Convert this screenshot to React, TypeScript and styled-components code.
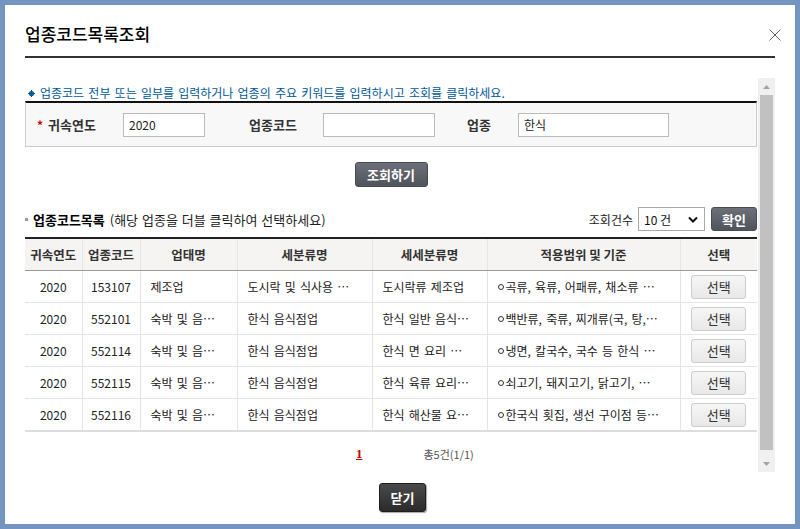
import React from 'react';
import styled, { createGlobalStyle } from 'styled-components';

const GlobalStyle = createGlobalStyle`
  html, body {
    margin: 0;
    padding: 0;
    background: #7495bf;
  }
  body {
    font-family: "Noto Sans CJK KR", "Noto Sans", sans-serif;
    color: #333;
  }
`;

interface Row {
    year: string;
    code: string;
    bizType: string;
    subClass: string;
    detailClass: string;
    scope: string;
}

const rows: Row[] = [
    { year: '2020', code: '153107', bizType: '제조업', subClass: '도시락 및 식사용 …', detailClass: '도시락류 제조업', scope: '곡류, 육류, 어패류, 채소류 …' },
    { year: '2020', code: '552101', bizType: '숙박 및 음…', subClass: '한식 음식점업', detailClass: '한식 일반 음식…', scope: '백반류, 죽류, 찌개류(국, 탕,…' },
    { year: '2020', code: '552114', bizType: '숙박 및 음…', subClass: '한식 음식점업', detailClass: '한식 면 요리 …', scope: '냉면, 칼국수, 국수 등 한식 …' },
    { year: '2020', code: '552115', bizType: '숙박 및 음…', subClass: '한식 음식점업', detailClass: '한식 육류 요리…', scope: '쇠고기, 돼지고기, 닭고기, …' },
    { year: '2020', code: '552116', bizType: '숙박 및 음…', subClass: '한식 음식점업', detailClass: '한식 해산물 요…', scope: '한국식 횟집, 생선 구이점 등…' },
];

const columns = [
    { title: '귀속연도', width: 57 },
    { title: '업종코드', width: 58 },
    { title: '업태명', width: 97 },
    { title: '세분류명', width: 135 },
    { title: '세세분류명', width: 115 },
    { title: '적용범위 및 기준', width: 193 },
    { title: '선택', width: 77 },
];

const Frame = styled.div`
  margin: 5px;
  height: 519px;
  background: #fff;
  display: flex;
  flex-direction: column;
  padding: 0 20px;
  box-sizing: border-box;
  position: relative;
`;

const Header = styled.div`
  padding-top: 20px;
  height: 31px;
  border-bottom: 2px solid #333;
`;

const Title = styled.h1`
  margin: 0;
  font-size: 17px;
  line-height: 18px;
  font-weight: 500;
  color: #000;
  word-spacing: 1px;
`;

const CloseButton = styled.div`
  position: absolute;
  top: 17px;
  right: 14px;
  width: 12px;
  height: 12px;
  cursor: pointer;
`;

const ScrollArea = styled.div`
  margin-top: 20px;
  height: 394px;
  display: flex;
  overflow: hidden;
`;

const Content = styled.div`
  width: 732px;
  flex-shrink: 0;
`;

const ScrollBar = styled.div`
  width: 17px;
  margin-left: 1px;
  background: #f0f0f0;
  display: flex;
  flex-direction: column;
`;

const ArrowBtn = styled.div`
  height: 17px;
  display: flex;
  align-items: center;
  justify-content: center;
`;

const Track = styled.div`
  flex: 1;
  padding: 0 2px 5px;
  display: flex;
`;

const Thumb = styled.div`
  flex: 1;
  background: #c1c1c1;
`;

const InfoText = styled.p`
  margin: 0;
  padding: 7px 0 0 3px;
  height: 16px;
  font-size: 12px;
  line-height: 16px;
  word-spacing: 1.5px;
  color: #00589a;
  display: flex;
  align-items: center;
  gap: 5px;
`;

const SearchBox = styled.div`
  border: 1px solid #ccc;
  border-top: 2px solid #111;
  background: #f8f8f8;
  height: 43px;
  padding: 0 11px;
  display: flex;
  align-items: center;
`;

const Required = styled.span`
  color: #c00;
  font-size: 12px;
  font-weight: bold;
  width: 11px;
`;

const Label = styled.label<{ $w: number; $ml?: number }>`
  width: ${(p) => p.$w}px;
  margin-left: ${(p) => p.$ml ?? 0}px;
  font-size: 13px;
  font-weight: bold;
  color: #333;
`;

const Input = styled.input<{ $w: number }>`
  width: ${(p) => p.$w}px;
  height: 24px;
  box-sizing: border-box;
  border: 1px solid #bbb;
  background: #fff;
  padding: 0 5px;
  font-family: inherit;
  font-size: 12px;
  color: #222;
  outline: none;
`;

const Center = styled.div<{ $mt: number }>`
  display: flex;
  justify-content: center;
  margin-top: ${(p) => p.$mt}px;
`;

const DarkButton = styled.button<{ $w: number; $h: number }>`
  width: ${(p) => p.$w}px;
  height: ${(p) => p.$h}px;
  border: 1px solid #474b52;
  border-radius: 3px;
  background: linear-gradient(#6b7079, #50545c);
  color: #fff;
  font-family: inherit;
  font-size: 13px;
  font-weight: bold;
  padding: 0;
  cursor: pointer;
`;

const CloseDialogButton = styled(DarkButton)`
  background: linear-gradient(#4a4a4a, #2b2b2b);
  border-color: #1e1e1e;
  box-shadow: 1px 1px 1px rgba(0, 0, 0, 0.35);
`;

const ListBar = styled.div`
  margin-top: 20px;
  height: 24px;
  display: flex;
  align-items: center;
`;

const SquareBullet = styled.span`
  width: 3px;
  height: 3px;
  background: #999;
  margin-right: 5px;
`;

const ListTitle = styled.strong`
  font-size: 13px;
  color: #000;
`;

const ListHint = styled.span`
  font-size: 13px;
  color: #222;
  margin-left: 5px;
  word-spacing: 1px;
  flex: 1;
`;

const CountLabel = styled.span`
  font-size: 12px;
  color: #222;
  margin-right: 5px;
`;

const FakeSelect = styled.div`
  width: 67px;
  height: 24px;
  box-sizing: border-box;
  border: 1px solid #aaa;
  background: #fff;
  display: flex;
  align-items: center;
  justify-content: space-between;
  padding: 0 6px 0 5px;
  font-size: 12px;
  color: #111;
  margin-right: 6px;
`;

const Table = styled.table`
  margin-top: 6px;
  width: 732px;
  border-collapse: collapse;
  table-layout: fixed;
  border-top: 2px solid #222;
`;

const Th = styled.th`
  height: 31px;
  padding: 0;
  background: #f5f4f2;
  border-bottom: 1px solid #999;
  border-left: 1px solid #e6e6e6;
  font-size: 12.5px;
  font-weight: bold;
  color: #333;
  text-align: center;
  &:first-child {
    border-left: none;
  }
`;

const Tr = styled.tr`
  &:last-child td {
    border-bottom: 2px solid #ddd;
  }
`;

const Td = styled.td<{ $center?: boolean }>`
  height: 31px;
  padding: 0 ${(p) => (p.$center ? 0 : 10)}px;
  border-bottom: 1px solid #e4e4e4;
  border-left: 1px solid #e4e4e4;
  font-size: 12px;
  word-spacing: 1.5px;
  color: #222;
  text-align: ${(p) => (p.$center ? 'center' : 'left')};
  white-space: nowrap;
  overflow: hidden;
  &:first-child {
    border-left: none;
  }
`;

const Ring = styled.span`
  display: inline-block;
  width: 4px;
  height: 4px;
  border: 1px solid #333;
  border-radius: 50%;
  margin-right: 2px;
  vertical-align: 2px;
`;

const PickButton = styled.button`
  width: 55px;
  height: 24px;
  border: 1px solid #ccc;
  border-radius: 3px;
  background: linear-gradient(#f6f6f6, #e8e8e8);
  font-family: inherit;
  font-size: 13px;
  color: #333;
  padding: 0;
  cursor: pointer;
`;

const Pager = styled.div`
  margin-top: 14px;
  padding-left: 331px;
  display: flex;
  align-items: center;
  height: 16px;
`;

const PageNum = styled.a`
  font-family: "Liberation Serif", serif;
  font-size: 13px;
  font-weight: bold;
  color: #c00;
  text-decoration: underline;
`;

const Total = styled.span`
  margin-left: 61px;
  font-size: 11px;
  color: #555;
`;

const Footer = styled.div`
  margin-top: 11px;
  display: flex;
  justify-content: center;
  padding-left: 5px;
`;

const Gear = () => (
    <svg width="7" height="7" viewBox="0 0 7 7">
        <circle cx="3.5" cy="3.5" r="2.6" fill="#00589a" />
        <circle cx="3.5" cy="3.5" r="1" fill="#fff" />
        <rect x="3" y="0" width="1" height="7" fill="#00589a" />
        <rect x="0" y="3" width="7" height="1" fill="#00589a" />
    </svg>
);

const App = () => {
    return (
        <>
            <GlobalStyle />
            <Frame>
                <Header>
                    <Title>업종코드목록조회</Title>
                </Header>
                <CloseButton>
                    <svg width="12" height="12" viewBox="0 0 12 12">
                        <path d="M0.5 0.5 L11.5 11.5 M11.5 0.5 L0.5 11.5" stroke="#5a5f78" strokeWidth="1" />
                    </svg>
                </CloseButton>

                <ScrollArea>
                    <Content>
                        <InfoText>
                            <Gear />
                            업종코드 전부 또는 일부를 입력하거나 업종의 주요 키워드를 입력하시고 조회를 클릭하세요.
                        </InfoText>
                        <SearchBox>
                            <Required>*</Required>
                            <Label $w={75}>귀속연도</Label>
                            <Input $w={82} defaultValue="2020" />
                            <Label $w={74} $ml={44}>업종코드</Label>
                            <Input $w={112} defaultValue="" />
                            <Label $w={51} $ml={32}>업종</Label>
                            <Input $w={151} defaultValue="한식" />
                        </SearchBox>
                        <Center $mt={15}>
                            <DarkButton $w={73} $h={25}>조회하기</DarkButton>
                        </Center>
                        <ListBar>
                            <SquareBullet />
                            <ListTitle>업종코드목록</ListTitle>
                            <ListHint>(해당 업종을 더블 클릭하여 선택하세요)</ListHint>
                            <CountLabel>조회건수</CountLabel>
                            <FakeSelect>
                                <span>10 건</span>
                                <svg width="10" height="7" viewBox="0 0 10 7">
                                    <path d="M1 1.5 L5 5.5 L9 1.5" stroke="#111" strokeWidth="2" fill="none" />
                                </svg>
                            </FakeSelect>
                            <DarkButton $w={46} $h={24}>확인</DarkButton>
                        </ListBar>
                        <Table>
                            <colgroup>
                                {columns.map((c) => (
                                    <col key={c.title} style={{ width: c.width }} />
                                ))}
                            </colgroup>
                            <thead>
                                <tr>
                                    {columns.map((c) => (
                                        <Th key={c.title}>{c.title}</Th>
                                    ))}
                                </tr>
                            </thead>
                            <tbody>
                                {rows.map((r) => (
                                    <Tr key={r.code}>
                                        <Td $center>{r.year}</Td>
                                        <Td $center>{r.code}</Td>
                                        <Td>{r.bizType}</Td>
                                        <Td>{r.subClass}</Td>
                                        <Td>{r.detailClass}</Td>
                                        <Td>
                                            <Ring />
                                            {r.scope}
                                        </Td>
                                        <Td $center>
                                            <PickButton>선택</PickButton>
                                        </Td>
                                    </Tr>
                                ))}
                            </tbody>
                        </Table>
                        <Pager>
                            <PageNum>1</PageNum>
                            <Total>총5건(1/1)</Total>
                        </Pager>
                    </Content>
                    <ScrollBar>
                        <ArrowBtn>
                            <svg width="7" height="4" viewBox="0 0 7 4">
                                <path d="M0 4 L3.5 0 L7 4 Z" fill="#a3a3a3" />
                            </svg>
                        </ArrowBtn>
                        <Track>
                            <Thumb />
                        </Track>
                        <ArrowBtn>
                            <svg width="7" height="4" viewBox="0 0 7 4">
                                <path d="M0 0 L3.5 4 L7 0 Z" fill="#a3a3a3" />
                            </svg>
                        </ArrowBtn>
                    </ScrollBar>
                </ScrollArea>

                <Footer>
                    <CloseDialogButton $w={47} $h={29}>닫기</CloseDialogButton>
                </Footer>
            </Frame>
        </>
    );
};

export default App;
